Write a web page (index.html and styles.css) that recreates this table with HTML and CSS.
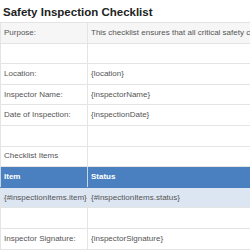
FILE: index.html
```html
<!DOCTYPE html>
<html lang="en">
<head>
    <meta charset="UTF-8">
    <title>Safety Inspection Checklist</title>
    <link rel="stylesheet" href="styles.css">
</head>
<body>
    <h1 class="title">Safety Inspection Checklist</h1>
    <table class="sheet">
        <tr class="shaded"><td class="label">Purpose:</td><td>This checklist ensures that all critical safety controls are inspected</td></tr>
        <tr><td class="label"></td><td></td></tr>
        <tr><td class="label">Location:</td><td>{location}</td></tr>
        <tr><td class="label">Inspector Name:</td><td>{inspectorName}</td></tr>
        <tr><td class="label">Date of Inspection:</td><td>{inspectionDate}</td></tr>
        <tr><td class="label"></td><td></td></tr>
        <tr><td class="label">Checklist Items</td><td></td></tr>
        <tr class="head"><td class="label">Item</td><td>Status</td></tr>
        <tr class="item"><td class="label">{#inspectionItems.item}</td><td>{#inspectionItems.status}</td></tr>
        <tr><td class="label"></td><td></td></tr>
        <tr><td class="label">Inspector Signature:</td><td>{inspectorSignature}</td></tr>
    </table>
</body>
</html>
```

FILE: styles.css
```css
body {
    margin: 0;
    font-family: "Liberation Sans", Arial, sans-serif;
    color: #555;
    background: #fff;
    overflow: hidden;
}
.title {
    margin: 0;
    padding: 5px 3px 0;
    height: 17px;
    font-size: 11.5px;
    line-height: 14px;
    color: #222;
}
.sheet {
    border-collapse: collapse;
    table-layout: fixed;
    width: 330px;
    font-size: 8px;
}
.sheet td {
    border: 1px solid #e4e4e4;
    height: 19.6px;
    padding: 0 3px;
    white-space: nowrap;
    overflow: hidden;
    line-height: 10px;
}
.sheet td.label {
    width: 80px;
}
.shaded td {
    background: #f6f6f6;
}
.head td {
    background: #4a7fc0;
    color: #fff;
    font-weight: bold;
    border-color: #4a7fc0 #c6d6ea;
}
.item td {
    background: #dce6f2;
}
```
